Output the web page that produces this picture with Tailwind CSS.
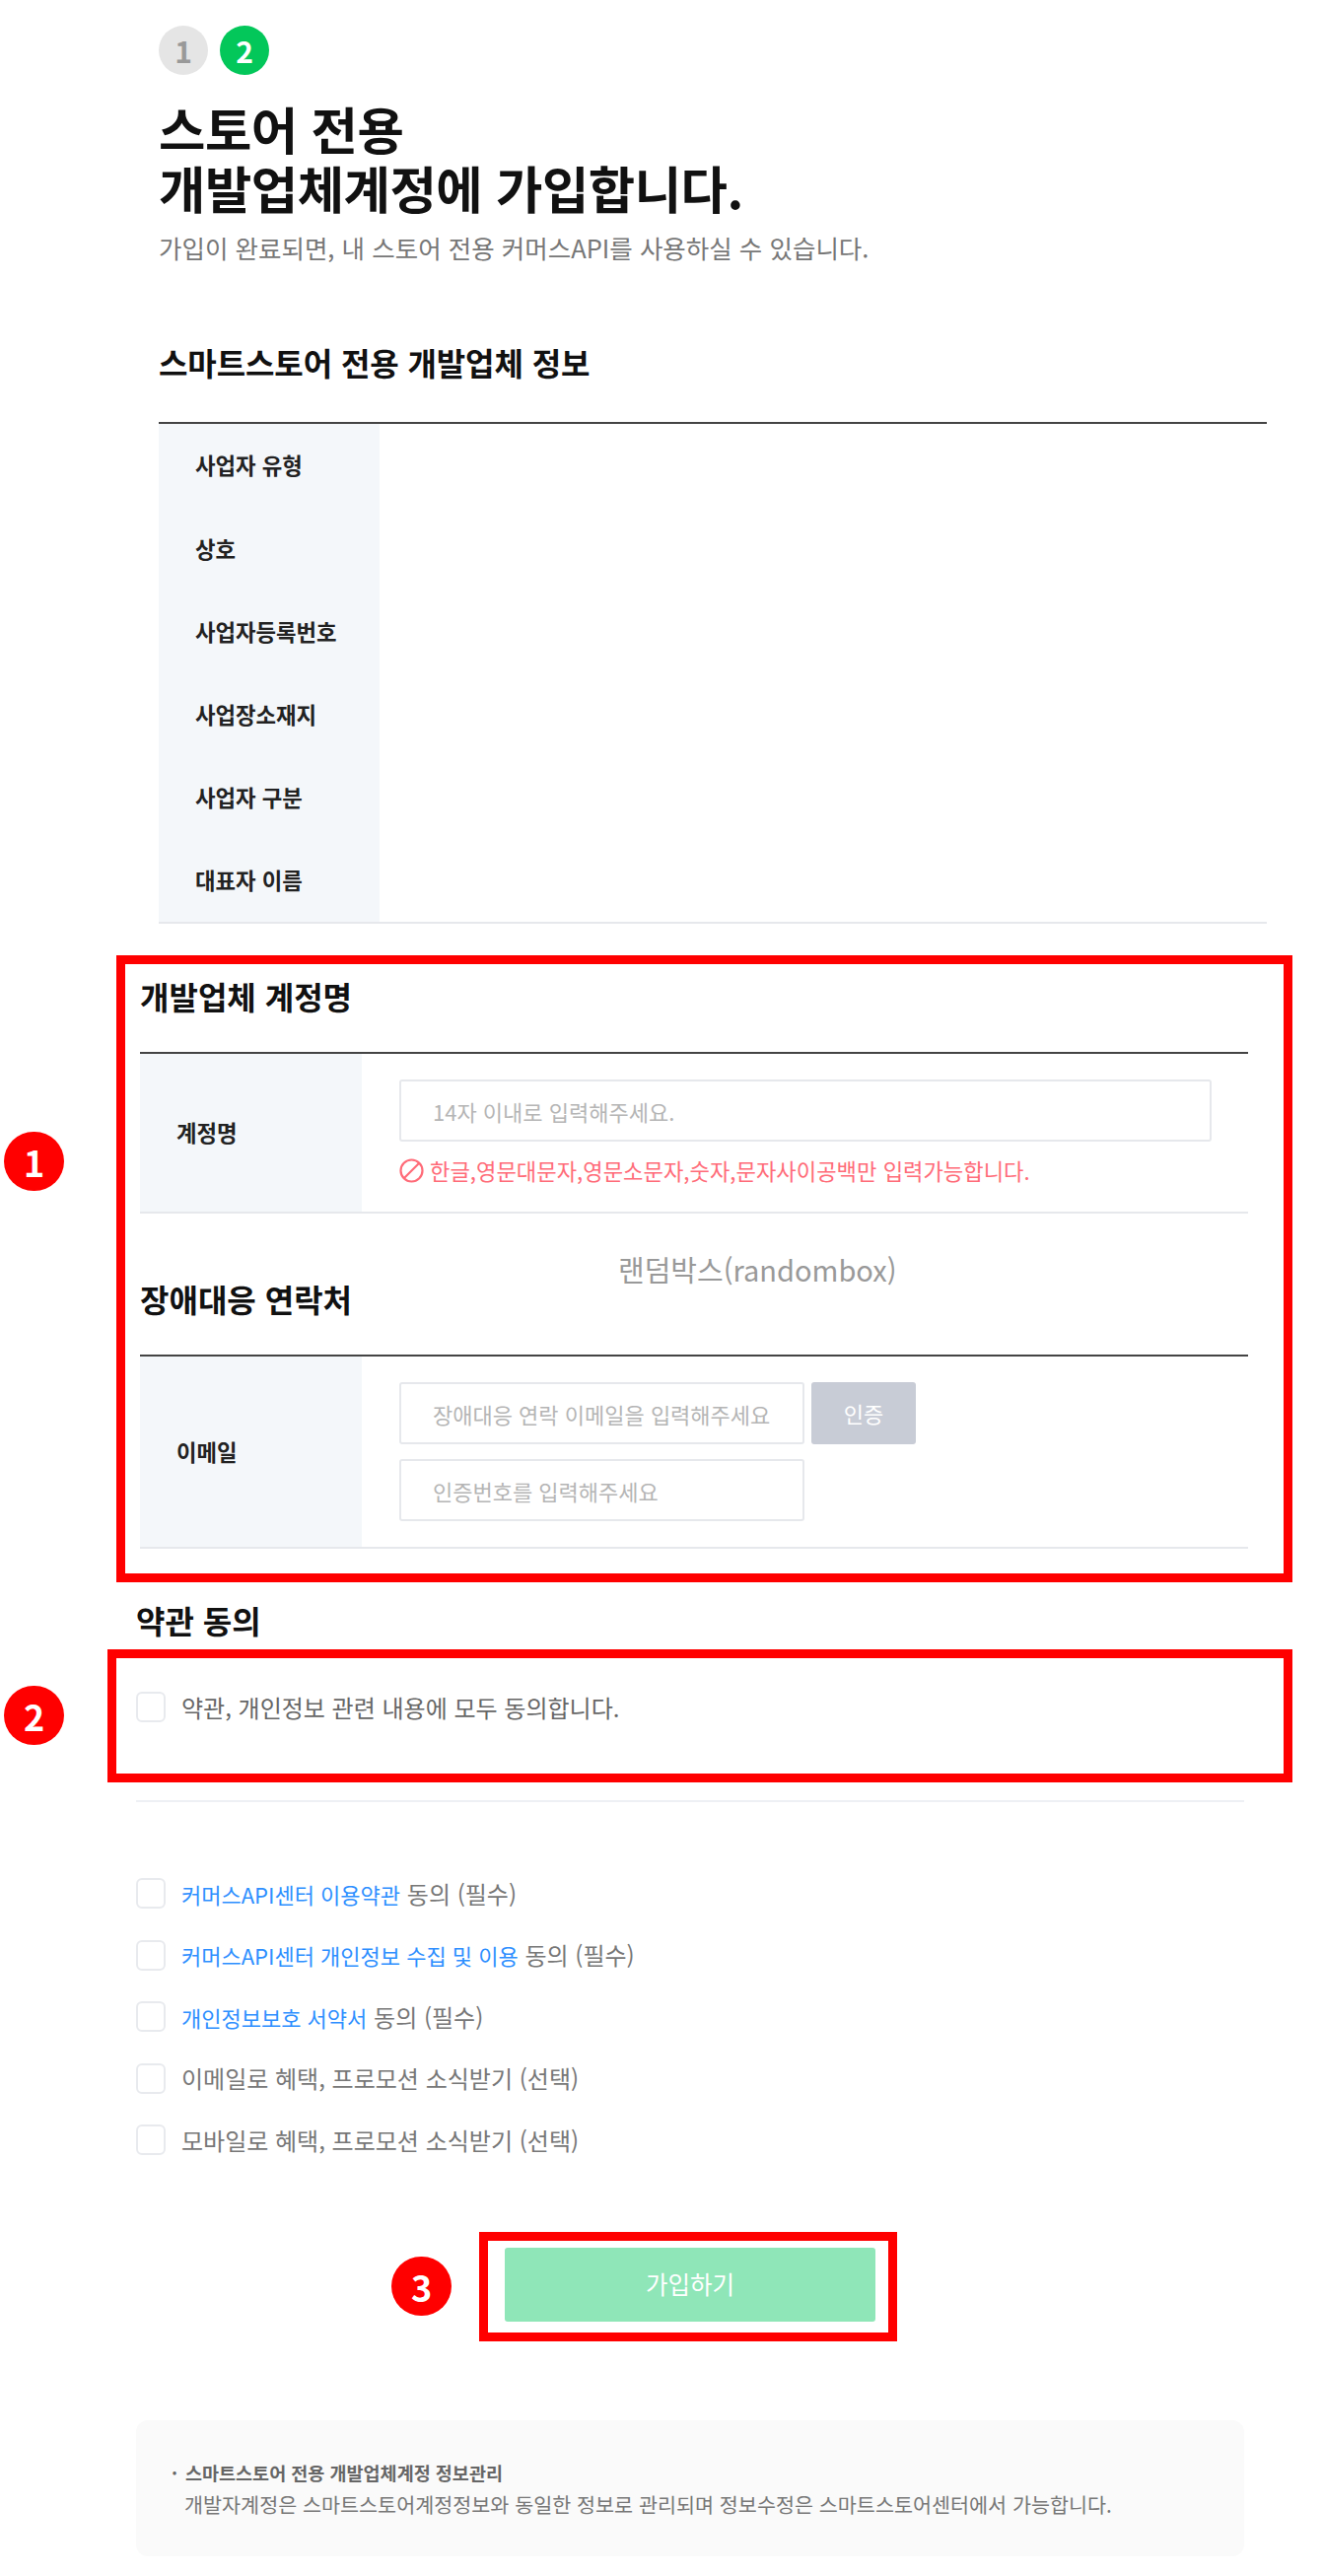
<!DOCTYPE html>
<html lang="ko">
<head>
    <meta charset="UTF-8">
    <title>개발업체계정 가입</title>
    <script src="https://cdn.jsdelivr.net/npm/@tailwindcss/browser@4"></script>
</head>
<body class="bg-white font-['Noto_Sans_CJK_KR','Noto_Sans',sans-serif]">
    <div class="relative w-[1342px] h-[2613px] overflow-hidden">

        <!-- store info -->
        <section class="ml-[161px] w-[1124px] pt-[26px]">
            <div class="flex gap-3">
                <span class="w-[50px] h-[50px] rounded-full bg-[#e5e5e5] text-[#999] flex items-center justify-center text-[30px] font-bold">1</span>
                <span class="w-[50px] h-[50px] rounded-full bg-[#03c75a] text-white flex items-center justify-center text-[30px] font-bold">2</span>
            </div>
            <h1 class="mt-[24px] text-[51.5px] leading-[60px] font-bold text-[#111] tracking-[-0.5px]">스토어 전용<br>개발업체계정에 가입합니다.</h1>
            <p class="mt-[13px] text-[25.5px] leading-[36px] text-[#777]">가입이 완료되면, 내 스토어 전용 커머스API를 사용하실 수 있습니다.</p>
            <h2 class="mt-[75px] text-[32px] leading-[46px] font-bold text-[#111] tracking-[-0.1px]">스마트스토어 전용 개발업체 정보</h2>
            <div class="mt-[38px] border-t-2 border-b-2 border-t-[#444] border-b-[#e6e8ec]">
                <dl class="w-[224px] h-[505px] bg-[#f4f7fa] pl-[37px] flex flex-col justify-around text-[22.3px] font-bold text-[#222]">
                    <dt>사업자 유형</dt>
                    <dt>상호</dt>
                    <dt>사업자등록번호</dt>
                    <dt>사업장소재지</dt>
                    <dt>사업자 구분</dt>
                    <dt>대표자 이름</dt>
                </dl>
            </div>
        </section>

        <!-- account name + contact -->
        <section class="ml-[142px] w-[1124px] mt-[50px]">
            <h2 class="text-[32px] leading-[46px] font-bold text-[#111]">개발업체 계정명</h2>
            <div class="mt-[34px] border-t-2 border-b-2 border-t-[#444] border-b-[#e6e8ec] flex h-[164px]">
                <div class="w-[225px] bg-[#f4f7fa] pl-[37px] flex items-center text-[22.3px] font-bold text-[#222]">계정명</div>
                <div class="pl-[38px] pt-[26px]">
                    <input class="block w-[824px] h-[63px] border-2 border-[#e6e8ec] rounded-[3px] px-[32px] text-[22px] placeholder:text-[#b5b5b5]" placeholder="14자 이내로 입력해주세요.">
                    <p class="mt-[16px] flex items-center gap-[6px] text-[22.2px] leading-[26px] text-[#ff6b78]">
                        <svg class="w-[25px] h-[25px]" viewBox="0 0 25 25" fill="none" stroke="#ff6b78" stroke-width="2.2"><circle cx="12.5" cy="12.5" r="11"/><path d="M20 5 5 20"/></svg>
                        한글,영문대문자,영문소문자,숫자,문자사이공백만 입력가능합니다.
                    </p>
                </div>
            </div>
            <h2 class="mt-[63px] text-[32px] leading-[46px] font-bold text-[#111]">장애대응 연락처</h2>
            <div class="mt-[34px] border-t-2 border-b-2 border-t-[#444] border-b-[#e6e8ec] flex h-[197px]">
                <div class="w-[225px] bg-[#f4f7fa] pl-[37px] flex items-center text-[22.3px] font-bold text-[#222]">이메일</div>
                <div class="pl-[38px] pt-[26px]">
                    <div class="flex gap-[7px]">
                        <input class="block w-[411px] h-[63px] border-2 border-[#e6e8ec] rounded-[3px] px-[32px] text-[22px] placeholder:text-[#b5b5b5]" placeholder="장애대응 연락 이메일을 입력해주세요">
                        <button class="w-[106px] h-[63px] bg-[#c8ccd6] rounded-[3px] text-white text-[22px]">인증</button>
                    </div>
                    <input class="block mt-[15px] w-[411px] h-[63px] border-2 border-[#e6e8ec] rounded-[3px] px-[32px] text-[22px] placeholder:text-[#b5b5b5]" placeholder="인증번호를 입력해주세요">
                </div>
            </div>
        </section>

        <!-- terms -->
        <section class="ml-[138px] w-[1124px] mt-[49px]">
            <h2 class="text-[32px] leading-[46px] font-bold text-[#111]">약관 동의</h2>
            <label class="mt-[50px] h-[31px] flex items-center gap-[16px] text-[24px] text-[#666]">
                <span class="w-[30px] h-[31px] rounded-[6px] border-2 border-[#e8eaee]"></span>
                약관, 개인정보 관련 내용에 모두 동의합니다.
            </label>
            <div class="mt-[79px] h-[2px] bg-[#eef0f4]"></div>
            <ul class="mt-[77px] flex flex-col gap-[31.5px] text-[24px] text-[#777]">
                <li class="flex items-center gap-[16px] h-[31px]"><span class="w-[30px] h-[31px] rounded-[6px] border-2 border-[#e8eaee]"></span><span><a class="text-[22px] text-[#2e8fff]">커머스API센터 이용약관</a> 동의 (필수)</span></li>
                <li class="flex items-center gap-[16px] h-[31px]"><span class="w-[30px] h-[31px] rounded-[6px] border-2 border-[#e8eaee]"></span><span><a class="text-[22px] text-[#2e8fff]">커머스API센터 개인정보 수집 및 이용</a> 동의 (필수)</span></li>
                <li class="flex items-center gap-[16px] h-[31px]"><span class="w-[30px] h-[31px] rounded-[6px] border-2 border-[#e8eaee]"></span><span><a class="text-[22px] text-[#2e8fff]">개인정보보호 서약서</a> 동의 (필수)</span></li>
                <li class="flex items-center gap-[16px] h-[31px]"><span class="w-[30px] h-[31px] rounded-[6px] border-2 border-[#e8eaee]"></span><span>이메일로 혜택, 프로모션 소식받기 (선택)</span></li>
                <li class="flex items-center gap-[16px] h-[31px]"><span class="w-[30px] h-[31px] rounded-[6px] border-2 border-[#e8eaee]"></span><span>모바일로 혜택, 프로모션 소식받기 (선택)</span></li>
            </ul>
            <button class="block mt-[94px] ml-[374px] w-[376px] h-[75px] bg-[#8fe6b8] rounded-[3px] text-white text-[24.5px]">가입하기</button>
            <div class="mt-[100px] h-[138px] bg-[#fafafa] rounded-[12px] pt-[37px] pl-[36px]">
                <p class="flex gap-[8px] text-[18.5px] leading-[32px] font-bold text-[#666]"><span>·</span><span>스마트스토어 전용 개발업체계정 정보관리</span></p>
                <p class="pl-[13px] text-[20.7px] leading-[32px] text-[#777]">개발자계정은 스마트스토어계정정보와 동일한 정보로 관리되며 정보수정은 스마트스토어센터에서 가능합니다.</p>
            </div>
        </section>

        <!-- stray overlay text -->
        <span class="absolute left-[627px] top-[1266px] text-[29px] leading-[42px] text-[#999]">랜덤박스(randombox)</span>

        <!-- annotations on top of the screenshot -->
        <div class="absolute left-[118px] top-[969px] w-[1193px] h-[636px] border-[9px] border-[#f00]"></div>
        <div class="absolute left-[109px] top-[1673px] w-[1202px] h-[135px] border-[9px] border-[#f00]"></div>
        <div class="absolute left-[486px] top-[2264px] w-[424px] h-[111px] border-[9px] border-[#f00]"></div>
        <span class="absolute left-[4px] top-[1148px] w-[61px] h-[60px] rounded-full bg-[#f00] text-white text-[36px] font-bold flex items-center justify-center">1</span>
        <span class="absolute left-[4px] top-[1710px] w-[61px] h-[60px] rounded-full bg-[#f00] text-white text-[36px] font-bold flex items-center justify-center">2</span>
        <span class="absolute left-[397px] top-[2289px] w-[61px] h-[60px] rounded-full bg-[#f00] text-white text-[36px] font-bold flex items-center justify-center">3</span>
    </div>
</body>
</html>
